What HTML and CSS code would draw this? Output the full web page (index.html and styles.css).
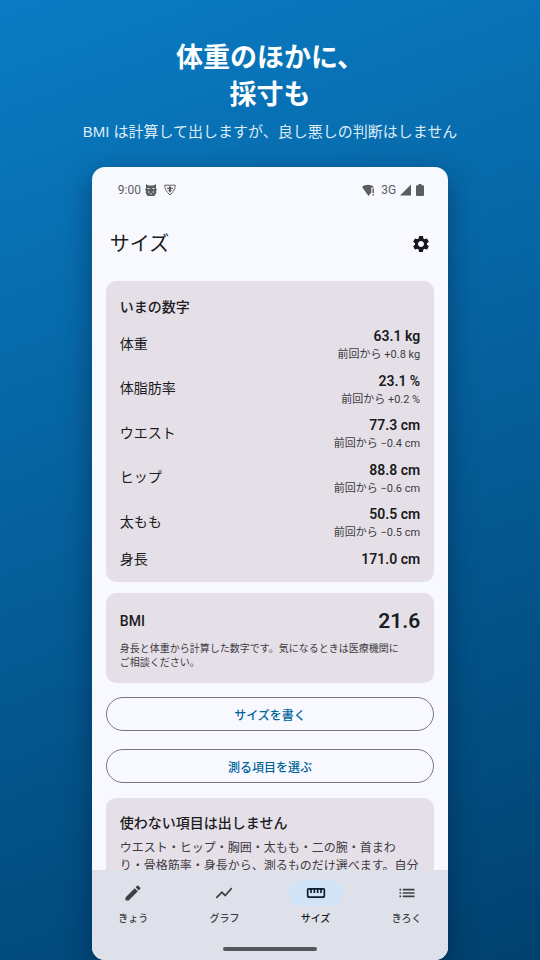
FILE: index.html
```html
<!DOCTYPE html>
<html lang="ja">
<head>
<meta charset="utf-8">
<meta name="viewport" content="width=device-width, initial-scale=1">
<title>サイズ</title>
<link rel="stylesheet" href="styles.css">
</head>
<body>
<header class="hero">
  <h1>体重のほかに、<br>採寸も</h1>
  <p>BMI は計算して出しますが、良し悪しの判断はしません</p>
</header>
<main class="phone">
  <div class="status">
    <span class="time">9:00</span>
    <svg class="st-cat" viewBox="0 0 12 12"><path d="M1 0l2.500 1.500h5L11 0v4.500l1 1-1 1.500.5 1.500L9.500 12h-7L.5 8.500 1 7 0 5.500l1-1z"/><path class="cut" d="M2.500 4h2v1h-2zM7.500 4h2v1h-2zM3 7.500h1.500v1H3zM7.500 7.500H9v1H7.500zM5 9.500h2v.8H5z"/></svg>
    <svg class="st-shield" viewBox="0 0 12 12"><path class="line" d="M.8 1.200h10.400c.4 3-2 6.800-5.200 9.800C2.800 8 .4 4.200.8 1.200z"/><path d="M5 2.500h2v1.300h1.800v1.200H7v1h1L6 8.800 4 6h1V5H3.200V3.800H5z"/></svg>
    <span class="spacer"></span>
    <svg class="st-wifi" viewBox="0 0 13 12"><path d="M0 3C3.500 0 8.500 0 12 3l-.5.6H9.300v5L6.500 12z"/><path d="M10.500 4.500h1.400v4.500h-1.400zM10.500 10h1.400v1.400h-1.400z"/></svg>
    <span class="net">3G</span>
    <svg class="st-signal" viewBox="0 0 12 12"><path d="M0 12L12 0v12z"/></svg>
    <svg class="st-battery" viewBox="0 0 8 12"><path d="M2.500 0h3v1.200H7q1 0 1 1V11q0 1-1 1H1q-1 0-1-1V2.200q0-1 1-1h1.500z"/></svg>
  </div>
  <div class="appbar">
    <h2>サイズ</h2>
    <button class="gear" type="button" aria-label="設定"><svg viewBox="0 0 24 24"><path d="M19.140 12.940c.04-.3.06-.61.06-.94 0-.32-.02-.64-.07-.94l2.030-1.580c.18-.14.23-.41.12-.61l-1.920-3.320c-.12-.22-.37-.29-.59-.22l-2.390.96c-.5-.38-1.030-.7-1.620-.94l-.36-2.540c-.04-.24-.24-.41-.48-.41h-3.840c-.24 0-.43.17-.47.41l-.36 2.540c-.59.24-1.130.57-1.620.94l-2.390-.96c-.22-.08-.47 0-.59.22L2.740 8.870c-.12.21-.08.47.12.61l2.030 1.580c-.05.3-.09.63-.09.94s.02.64.07.94l-2.030 1.580c-.18.14-.23.41-.12.61l1.920 3.320c.12.22.37.29.59.22l2.390-.96c.5.38 1.030.7 1.620.94l.36 2.540c.05.24.24.41.48.41h3.840c.24 0 .44-.17.47-.41l.36-2.540c.59-.24 1.130-.56 1.620-.94l2.390.96c.22.08.47 0 .59-.22l1.920-3.320c.12-.22.07-.47-.12-.61l-2.010-1.580zM12 15.600c-1.980 0-3.600-1.620-3.600-3.600s1.620-3.600 3.600-3.600 3.600 1.620 3.600 3.600-1.620 3.600-3.600 3.600z"/></svg></button>
  </div>
  <div class="content">
    <section class="card now">
      <h3>いまの数字</h3>
      <dl class="sizes">
        <div class="row"><dt>体重</dt><dd><b>63.1 kg</b><small>前回から +0.8 kg</small></dd></div>
        <div class="row"><dt>体脂肪率</dt><dd><b>23.1 %</b><small>前回から +0.2 %</small></dd></div>
        <div class="row"><dt>ウエスト</dt><dd><b>77.3 cm</b><small>前回から −0.4 cm</small></dd></div>
        <div class="row"><dt>ヒップ</dt><dd><b>88.8 cm</b><small>前回から −0.6 cm</small></dd></div>
        <div class="row"><dt>太もも</dt><dd><b>50.5 cm</b><small>前回から −0.5 cm</small></dd></div>
        <div class="row"><dt>身長</dt><dd><b>171.0 cm</b></dd></div>
      </dl>
    </section>
    <section class="card bmi">
      <div class="row"><h3>BMI</h3><strong>21.6</strong></div>
      <p>身長と体重から計算した数字です。気になるときは医療機関に<br>ご相談ください。</p>
    </section>
    <div class="actions">
      <button class="pill" type="button">サイズを書く</button>
      <button class="pill" type="button">測る項目を選ぶ</button>
    </div>
    <section class="card note">
      <h3>使わない項目は出しません</h3>
      <p>ウエスト・ヒップ・胸囲・太もも・二の腕・首まわ<br>り・骨格筋率・身長から、測るものだけ選べます。自分</p>
    </section>
  </div>
  <div class="bottom">
    <nav>
      <a href="#today"><span class="ic"><svg viewBox="0 0 24 24"><path d="M3 17.250V21h3.750L17.810 9.940l-3.750-3.750L3 17.250zM20.710 7.040c.39-.39.39-1.020 0-1.410l-2.340-2.340c-.39-.39-1.020-.39-1.410 0l-1.830 1.830 3.750 3.750 1.830-1.830z"/></svg></span>きょう</a>
      <a href="#graph"><span class="ic"><svg viewBox="0 0 24 24"><path d="M3.500 18.490l6-6.010 4 4L22 6.920l-1.410-1.410-7.090 7.970-4-4L2 16.990z"/></svg></span>グラフ</a>
      <a href="#size" class="on" aria-current="page"><span class="ic"><svg viewBox="0 0 24 24"><path d="M21 6H3c-1.100 0-2 .9-2 2v8c0 1.100.9 2 2 2h18c1.100 0 2-.9 2-2V8c0-1.100-.9-2-2-2zm0 10H3V8h2v4h2V8h2v4h2V8h2v4h2V8h2v4h2V8h2v8z"/></svg></span>サイズ</a>
      <a href="#log"><span class="ic"><svg viewBox="0 0 24 24"><path d="M3 13h2v-2H3v2zm0 4h2v-2H3v2zm0-8h2V7H3v2zm4 4h14v-2H7v2zm0 4h14v-2H7v2zM7 7v2h14V7H7z"/></svg></span>きろく</a>
    </nav>
    <div class="home"></div>
  </div>
</main>
</body>
</html>
```
FILE: styles.css
```css
* { box-sizing: border-box; }
html { height: 100%; }
body {
  margin: 0;
  height: 100vh;
  display: flex;
  flex-direction: column;
  align-items: center;
  overflow: hidden;
  background: linear-gradient(160deg, #0a7cc4 0%, #00416f 100%);
  font-family: Roboto, "Noto Sans CJK JP", sans-serif;
  color: #1b1b21;
}
h1, h2, h3, p, dl, dd { margin: 0; }
.hero {
  flex: none;
  padding-top: 40px;
  height: 167px;
  text-align: center;
  color: #fff;
  font-family: "Liberation Sans", "Noto Sans CJK JP", sans-serif;
}
.hero h1 { font-size: 27px; line-height: 37px; font-weight: 700; }
.hero p { margin-top: 8px; font-size: 15px; line-height: 20px; color: #dcecf8; }
.phone {
  flex: 1;
  min-height: 0;
  width: 66%;
  display: flex;
  flex-direction: column;
  overflow: hidden;
  border-radius: 13px;
  background: #f8f9ff;
  box-shadow: 0 10px 28px rgba(0, 20, 50, .45);
}
.status {
  flex: none;
  display: flex;
  align-items: center;
  height: 45px;
  padding: 0 24px 0 26px;
  color: #5b5d61;
  font-size: 12px;
}
.status svg { height: 12px; fill: #5b5d61; }
.status .cut { fill: #f8f9ff; }
.status .line { fill: none; stroke: #5b5d61; }
.spacer { flex: 1; }
.st-cat { width: 12px; margin: 0 7px 0 4px; }
.st-shield { width: 12px; }
.st-wifi { width: 13px; margin-right: 6px; }
.st-signal { width: 11px; margin: 0 5px 0 4px; }
.st-battery { width: 8px; }
.appbar {
  flex: none;
  display: flex;
  align-items: center;
  justify-content: space-between;
  height: 64px;
  padding: 0 17px 0 18px;
  margin-bottom: 5px;
}
.appbar h2 { font-size: 20px; line-height: 28px; font-weight: 400; }
.gear { border: 0; padding: 0; background: none; width: 20px; height: 20px; }
.gear svg { width: 20px; height: 20px; display: block; fill: #17171d; }
.content { flex: 1; min-height: 0; overflow: hidden; padding: 0 14px; }
.card { background: #e5e0e8; border-radius: 10px; padding: 14px; margin-bottom: 11px; }
.card h3 { font-size: 14px; line-height: 22px; font-weight: 500; }
.now { padding: 15px 14px 12px; }
.sizes {
  display: flex;
  flex-direction: column;
  justify-content: space-between;
  min-height: 244px;
  margin-top: 8px;
}
.row { display: flex; align-items: center; justify-content: space-between; }
dt { font-size: 14px; line-height: 21px; }
dd { text-align: right; }
dd b { display: block; font-size: 14px; line-height: 21px; font-weight: 600; }
dd small { display: block; font-size: 11px; line-height: 15px; color: #3c3b42; }
.bmi { padding-bottom: 13px; }
.bmi strong { font-size: 21px; line-height: 28px; font-weight: 600; }
.bmi p { margin-top: 7px; font-size: 10px; line-height: 14px; color: #3c3b42; }
.actions { display: grid; gap: 18px; margin: 14px 0 15px; }
.pill {
  height: 34px;
  border: 1px solid #77777d;
  border-radius: 17px;
  background: none;
  color: #00639b;
  font: 500 12px "Noto Sans CJK JP", sans-serif;
}
.note p { margin-top: 5px; font-size: 12px; line-height: 18px; color: #3c3b42; }
.bottom { flex: none; height: 90px; background: #dee1ea; padding-top: 10px; }
nav { display: grid; grid-template-columns: repeat(4, 1fr); gap: 8px; }
nav a {
  display: flex;
  flex-direction: column;
  align-items: center;
  gap: 4px;
  color: #3f3f47;
  font-size: 10px;
  line-height: 18px;
  font-weight: 500;
  text-decoration: none;
}
nav .on { color: #17171d; }
.ic { display: grid; place-items: center; width: 54px; height: 26px; border-radius: 13px; }
.ic svg { width: 20px; height: 20px; fill: #3f3f47; }
.on .ic { background: #d0e3f7; }
.on svg { fill: #0a1d2e; }
.home { width: 94px; height: 4px; border-radius: 2px; background: #55575c; margin: 19px auto 0; }
```
